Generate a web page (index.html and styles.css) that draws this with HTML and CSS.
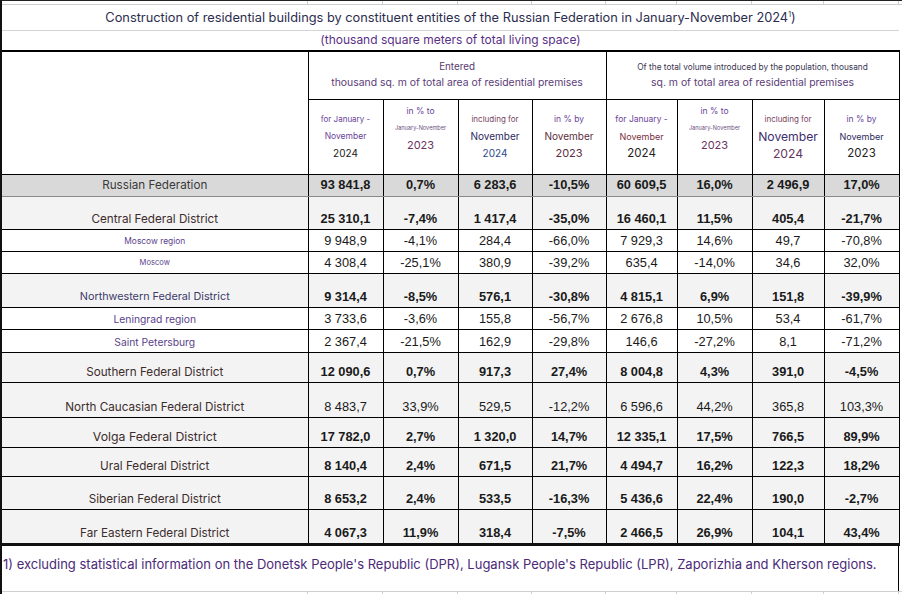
FILE: index.html
```html
<!DOCTYPE html>
<html>
<head>
<meta charset="utf-8">
<link rel="stylesheet" href="styles.css">
</head>
<body>
<div class="sheet">
  <div class="gridstrip">
    <span class="g0"></span><span class="g1"></span><span class="g1"></span><span class="g2"></span><span class="g2"></span><span class="g3"></span><span class="g1"></span><span class="g4"></span><span class="g1"></span>
  </div>
  <div class="title">Construction of residential buildings by constituent entities of the Russian Federation in January-November 2024<sup>1</sup>)</div>
  <div class="subtitle">(thousand square meters of total living space)</div>
  <table class="tbl">
    <colgroup>
      <col class="c-label"><col class="c75"><col class="c75"><col class="c74"><col class="c74"><col class="c71"><col class="c75"><col class="c72"><col class="c75">
    </colgroup>
    <tr class="h1">
      <td rowspan="2" class="blank"></td>
      <td colspan="4" class="grp"><span class="ln entered">Entered</span><span class="ln grp2">thousand sq. m of total area of residential premises</span></td>
      <td colspan="4" class="grp"><span class="ln grpsmall">Of the total volume introduced by the population, thousand</span><span class="ln grp2">sq. m of total area of residential premises</span></td>
    </tr>
    <tr class="h2">
      <td class="hc"><span class="ln s8 pu">for January -</span><span class="ln s85 pu">November</span><span class="ln s10 dk">2024</span></td>
      <td class="hc up"><span class="ln s85 pu">in % to</span><span class="ln s55 pu2">January-November</span><span class="ln s11 pb">2023</span></td>
      <td class="hc"><span class="ln s8 br">including for</span><span class="ln s10 nv">November</span><span class="ln s10 bl">2024</span></td>
      <td class="hc"><span class="ln s85 pu">in % by</span><span class="ln s10 br2">November</span><span class="ln s11 br2">2023</span></td>
      <td class="hc"><span class="ln s85 pu">for January -</span><span class="ln s9 rb">November</span><span class="ln s115 dk">2024</span></td>
      <td class="hc up"><span class="ln s85 pu">in % to</span><span class="ln s55 pu2">January-November</span><span class="ln s11 pb">2023</span></td>
      <td class="hc"><span class="ln s8 br">including for</span><span class="ln s12 nv2">November</span><span class="ln s12 pb">2024</span></td>
      <td class="hc"><span class="ln s85 pu">in % by</span><span class="ln s9 nv">November</span><span class="ln s115 dk">2023</span></td>
    </tr>
    <tr class="rf r22">
      <td class="lbl l-rf">Russian Federation</td>
      <td>93 841,8</td><td>0,7%</td><td>6 283,6</td><td>-10,5%</td><td>60 609,5</td><td>16,0%</td><td>2 496,9</td><td>17,0%</td>
    </tr>
    <tr class="fd b r33">
      <td class="lbl l-dk">Central Federal District</td>
      <td>25 310,1</td><td>-7,4%</td><td>1 417,4</td><td>-35,0%</td><td>16 460,1</td><td>11,5%</td><td>405,4</td><td>-21,7%</td>
    </tr>
    <tr class="sub r22">
      <td class="lbl l-sm">Moscow region</td>
      <td>9 948,9</td><td>-4,1%</td><td>284,4</td><td>-66,0%</td><td>7 929,3</td><td>14,6%</td><td>49,7</td><td>-70,8%</td>
    </tr>
    <tr class="sub r22">
      <td class="lbl l-xs">Moscow</td>
      <td>4 308,4</td><td>-25,1%</td><td>380,9</td><td>-39,2%</td><td>635,4</td><td>-14,0%</td><td>34,6</td><td>32,0%</td>
    </tr>
    <tr class="fd b r34">
      <td class="lbl l-nv">Northwestern Federal District</td>
      <td>9 314,4</td><td>-8,5%</td><td>576,1</td><td>-30,8%</td><td>4 815,1</td><td>6,9%</td><td>151,8</td><td>-39,9%</td>
    </tr>
    <tr class="sub r22">
      <td class="lbl l-pu">Leningrad region</td>
      <td>3 733,6</td><td>-3,6%</td><td>155,8</td><td>-56,7%</td><td>2 676,8</td><td>10,5%</td><td>53,4</td><td>-61,7%</td>
    </tr>
    <tr class="sub r23">
      <td class="lbl l-pu">Saint Petersburg</td>
      <td>2 367,4</td><td>-21,5%</td><td>162,9</td><td>-29,8%</td><td>146,6</td><td>-27,2%</td><td>8,1</td><td>-71,2%</td>
    </tr>
    <tr class="fd b r30">
      <td class="lbl l-dk">Southern Federal District</td>
      <td>12 090,6</td><td>0,7%</td><td>917,3</td><td>27,4%</td><td>8 004,8</td><td>4,3%</td><td>391,0</td><td>-4,5%</td>
    </tr>
    <tr class="fd r35">
      <td class="lbl l-dk">North Caucasian Federal District</td>
      <td>8 483,7</td><td>33,9%</td><td>529,5</td><td>-12,2%</td><td>6 596,6</td><td>44,2%</td><td>365,8</td><td>103,3%</td>
    </tr>
    <tr class="fd b r30">
      <td class="lbl l-dk l-big">Volga Federal District</td>
      <td>17 782,0</td><td>2,7%</td><td>1 320,0</td><td>14,7%</td><td>12 335,1</td><td>17,5%</td><td>766,5</td><td>89,9%</td>
    </tr>
    <tr class="fd b r29">
      <td class="lbl l-dk">Ural Federal District</td>
      <td>8 140,4</td><td>2,4%</td><td>671,5</td><td>21,7%</td><td>4 494,7</td><td>16,2%</td><td>122,3</td><td>18,2%</td>
    </tr>
    <tr class="fd b r33">
      <td class="lbl l-dk">Siberian Federal District</td>
      <td>8 653,2</td><td>2,4%</td><td>533,5</td><td>-16,3%</td><td>5 436,6</td><td>22,4%</td><td>190,0</td><td>-2,7%</td>
    </tr>
    <tr class="fd b r35 last">
      <td class="lbl l-dk">Far Eastern Federal District</td>
      <td>4 067,3</td><td>11,9%</td><td>318,4</td><td>-7,5%</td><td>2 466,5</td><td>26,9%</td><td>104,1</td><td>43,4%</td>
    </tr>
  </table>
  <div class="footnote">1) excluding statistical information on the Donetsk People's Republic (DPR), Lugansk People's Republic (LPR), Zaporizhia and Kherson regions.</div>
  <div class="gridstrip bottom">
    <span class="g0"></span><span class="g1"></span><span class="g1"></span><span class="g2"></span><span class="g2"></span><span class="g3"></span><span class="g1"></span><span class="g4"></span><span class="g1"></span>
  </div>
</div>
</body>
</html>
```
FILE: styles.css
```css
html, body {
  margin: 0;
  padding: 0;
  background: #fff;
}
body {
  width: 902px;
  height: 594px;
  overflow: hidden;
  font-family: Inter, "Noto Sans", sans-serif;
}
.sheet {
  border-left: 2px solid #111;
  border-top: 1px solid #222;
  width: 900px;
}
.gridstrip {
  display: flex;
  height: 3px;
  border-bottom: 1px solid #cfcfcf;
}
.gridstrip span {
  border-right: 1px solid #cfcfcf;
  box-sizing: border-box;
}
.gridstrip .g0 { width: 306px; }
.gridstrip .g1 { width: 75px; }
.gridstrip .g2 { width: 74px; }
.gridstrip .g3 { width: 71px; }
.gridstrip .g4 { width: 72px; }
.gridstrip.bottom {
  border-bottom: none;
  border-top: 1px solid #cfcfcf;
  height: 4px;
}
.title {
  height: 25px;
  line-height: 25px;
  border-bottom: 1px solid #d4d4d4;
  text-align: center;
  font-size: 12.8px;
  color: #2b2d4e;
  width: 897px;
  white-space: nowrap;
}
.title sup {
  font-size: 7px;
  vertical-align: 5px;
  line-height: 0;
}
.subtitle {
  height: 19px;
  line-height: 17px;
  text-align: center;
  font-size: 12px;
  color: #5a2f86;
  width: 897px;
}
.tbl {
  border-collapse: collapse;
  table-layout: fixed;
  width: 897px;
  border-top: 2px solid #000;
  border-right: 1px solid #000;
}
.c-label { width: 306px; }
.c75 { width: 75px; }
.c74 { width: 74px; }
.c71 { width: 71px; }
.c72 { width: 72px; }
.tbl td {
  border: 1px solid #000;
  padding: 0;
  text-align: center;
}
.tbl tr td:first-child { border-left: none; }
.ln {
  display: block;
  white-space: nowrap;
}
.h1 { height: 48px; }
.h1 td { vertical-align: middle; }
.h1 .ln { line-height: 16px; }
.blank { background: #fff; }
.entered { font-size: 9.8px; color: #55386f; }
.grp2 { font-size: 10.4px; color: #5b3c78; }
.grpsmall { font-size: 8.3px; color: #3a3550; }
.h2 { height: 75px; }
.hc {
  vertical-align: middle;
}
.hc .ln { line-height: 17px; }
.hc.up { padding-bottom: 17px; }
.s55 { font-size: 5.6px; }
.s8 { font-size: 8px; }
.s85 { font-size: 8.5px; }
.s9 { font-size: 9px; }
.s10 { font-size: 10px; }
.s11 { font-size: 11px; }
.s115 { font-size: 11.5px; }
.s12 { font-size: 12.2px; }
.pu { color: #6a3f9a; }
.pu2 { color: #6b5080; }
.pb { color: #6a3460; }
.dk { color: #222; }
.br { color: #7a3f5e; }
.br2 { color: #5e2e3e; }
.nv { color: #2d2a5e; }
.nv2 { color: #3e2e6e; }
.bl { color: #2b4a8a; }
.rb { color: #7a2e3e; }

.tbl tr.rf td, .tbl tr.fd td, .tbl tr.sub td {
  vertical-align: bottom;
  padding-bottom: 3px;
  font-family: "Liberation Sans", Arial, sans-serif;
  font-size: 12.8px;
  color: #1a1a1a;
  line-height: 14px;
}
.tbl tr.rf td {
  background: #d9d9d9;
  font-weight: bold;
  border-top-color: #8a8a8a;
  border-bottom-color: #8a8a8a;
  padding-bottom: 4px;
}
.tbl tr.fd td { background: #f3f3f3; }
.tbl tr.b td { font-weight: bold; }
.tbl tr.sub td { background: #fff; }
.tbl tr.last td { border-bottom: 3px solid #111; }
.r22 { height: 22px; }
.r23 { height: 23px; }
.r29 { height: 29px; }
.r30 { height: 30px; }
.r33 { height: 33px; }
.r34 { height: 34px; }
.r35 { height: 35px; }

.tbl tr td.lbl {
  font-family: Inter, "Noto Sans", sans-serif;
  font-weight: normal;
  font-size: 11.7px;
  white-space: nowrap;
}
.tbl tr td.l-rf { color: #3a3a3a; }
.tbl tr td.l-dk { color: #3d2d2d; }
.tbl tr td.l-big { font-size: 12.3px; }
.tbl tr td.l-nv { color: #3d3a6b; font-size: 10.8px; }
.tbl tr td.l-pu { color: #5b3f8c; font-size: 10.3px; }
.tbl tr td.l-sm { color: #5b3f8c; font-size: 8.4px; }
.tbl tr td.l-xs { color: #5b3f8c; font-size: 7.6px; }

.footnote {
  height: 45px;
  box-sizing: border-box;
  padding: 10px 0 0 1px;
  font-size: 13px;
  line-height: 17px;
  color: #4b2a78;
  white-space: nowrap;
  width: 897px;
  border-right: 1px solid #000;
}
```
